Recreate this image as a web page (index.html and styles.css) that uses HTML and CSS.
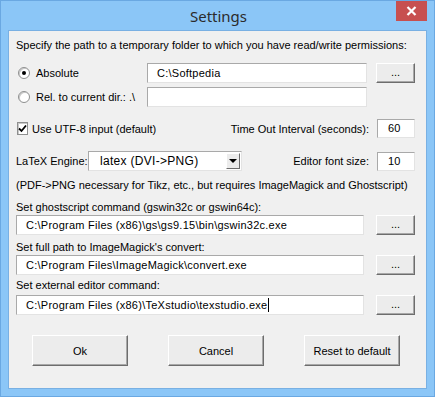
FILE: index.html
```html
<!DOCTYPE html>
<html lang="en">

<head>
    <meta charset="UTF-8">
    <meta name="viewport" content="width=device-width, initial-scale=1.0">
    <title>Settings</title>
    <link rel="stylesheet" href="styles.css">
</head>

<body>
    <div class="window">
        <div class="titlebar">
            <span class="title">Settings</span>
            <div class="close">
                <svg width="11" height="10" viewBox="0 0 11 10">
                    <path d="M1.5 1 L9.5 9 M9.5 1 L1.5 9" stroke="#fff" stroke-width="2.2" />
                </svg>
            </div>
        </div>
        <div class="client">
            <p class="text intro">Specify the path to a temporary folder to which you have read/write permissions:</p>

            <div class="row row-abs">
                <label class="choice"><span class="radio on"></span>Absolute</label>
                <div class="field short">C:\Softpedia</div>
                <div class="btn dots">...</div>
            </div>
            <div class="row row-rel">
                <label class="choice"><span class="radio"></span>Rel. to current dir.: .\</label>
                <div class="field short"></div>
            </div>

            <div class="row row-utf">
                <label class="choice"><span class="check">
                    <svg width="9" height="9" viewBox="0 0 9 9">
                        <path d="M1 4.5 L3.5 7 L8 1.5" fill="none" stroke="#000" stroke-width="1.8" />
                    </svg>
                </span>Use UTF-8 input (default)</label>
                <span class="spacer"></span>
                <span class="text">Time Out Interval (seconds):</span>
                <div class="field tiny">60</div>
            </div>

            <div class="row row-engine">
                <span class="text engine-label">LaTeX Engine:</span>
                <div class="combo">
                    <span>latex (DVI-&gt;PNG)</span>
                    <div class="arrow"></div>
                </div>
                <span class="spacer"></span>
                <span class="text">Editor font size:</span>
                <div class="field tiny">10</div>
            </div>

            <p class="text note">(PDF-&gt;PNG necessary for Tikz, etc., but requires ImageMagick and Ghostscript)</p>

            <p class="text label first">Set ghostscript command (gswin32c or gswin64c):</p>
            <div class="row path">
                <div class="field long">C:\Program Files (x86)\gs\gs9.15\bin\gswin32c.exe</div>
                <div class="btn dots">...</div>
            </div>
            <p class="text label">Set full path to ImageMagick's convert:</p>
            <div class="row path">
                <div class="field long">C:\Program Files\ImageMagick\convert.exe</div>
                <div class="btn dots">...</div>
            </div>
            <p class="text label last">Set external editor command:</p>
            <div class="row path editor">
                <div class="field long">C:\Program Files (x86)\TeXstudio\texstudio.exe<span class="caret"></span></div>
                <div class="btn dots">...</div>
            </div>

            <div class="actions">
                <div class="btn big">Ok</div>
                <div class="btn big">Cancel</div>
                <div class="btn big">Reset to default</div>
            </div>
        </div>
    </div>
</body>

</html>
```

FILE: styles.css
```css
* { box-sizing: border-box; }

body {
    margin: 0;
    background: #8bc6f7;
}

.window {
    position: relative;
    width: 435px;
    height: 397px;
    background: #8bc6f7;
    border: 1px solid #6aa8e2;
    font-family: "Liberation Sans", Arial, sans-serif;
    font-size: 11px;
    color: #000;
}

.titlebar {
    height: 29px;
    display: flex;
    justify-content: center;
    align-items: center;
}

.title {
    font-family: "Noto Sans", "Open Sans", sans-serif;
    font-size: 15px;
    color: #2b2b2b;
    margin-left: 2px;
    margin-top: 1px;
}

.close {
    position: absolute;
    top: 0;
    right: 7px;
    width: 31px;
    height: 20px;
    background: #c75050;
    display: flex;
    justify-content: center;
    align-items: center;
}

.client {
    height: 359px;
    margin: 0 7px;
    background: #f0f0f0;
    border: 1px solid #79b0e3;
    padding: 0 11px 0 7px;
}

.text {
    margin: 0;
    line-height: 14px;
    white-space: nowrap;
}

.intro { padding-top: 7px; }

.row {
    display: flex;
    align-items: center;
    height: 20px;
}

.row-abs { margin-top: 11px; }
.row-rel { margin-top: 4px; }
.row-utf { margin-top: 12px; height: 19px; }
.row-engine { margin-top: 13px; }

.spacer { flex: 1; }

.choice {
    width: 131px;
    display: flex;
    align-items: center;
    white-space: nowrap;
}

.radio {
    width: 12px;
    height: 12px;
    margin: 0 6px 0 2px;
    border-radius: 50%;
    background: #fff;
    border: 1px solid #8e8f8f;
    box-shadow: inset 1px 1px 0 #c9c9c9;
    display: flex;
    justify-content: center;
    align-items: center;
}

.radio.on::after {
    content: "";
    width: 4px;
    height: 4px;
    border-radius: 50%;
    background: #000;
}

.check {
    width: 13px;
    height: 13px;
    margin: 0 4px 0 1px;
    background: #fff;
    border: 1px solid #8e8f8f;
    box-shadow: inset 1px 1px 0 #c9c9c9;
    display: flex;
    justify-content: center;
    align-items: center;
}

.field {
    height: 20px;
    background: #fff;
    border: 1px solid;
    border-color: #a9a9a9 #e3e3e3 #e3e3e3 #a9a9a9;
    padding-left: 9px;
    line-height: 18px;
    letter-spacing: 0.25px;
    white-space: nowrap;
    overflow: hidden;
}

.field.short { width: 220px; }
.field.long { width: 348px; }

.field.tiny {
    width: 38px;
    height: 19px;
    margin-left: 8px;
    padding-left: 10px;
    line-height: 17px;
}

.caret {
    display: inline-block;
    width: 1px;
    height: 14px;
    background: #000;
    vertical-align: -3px;
    margin-left: 1px;
}

.btn {
    background: #ececec;
    border: 1px solid;
    border-color: #fff #6d6d6d #6d6d6d #fff;
    box-shadow: inset -1px -1px 0 #a8a8a8;
    display: flex;
    justify-content: center;
    align-items: center;
    white-space: nowrap;
}

.btn.dots {
    width: 39px;
    height: 20px;
    margin-left: 9px;
    padding-bottom: 3px;
}

.path { margin-top: 1px; }
.path .btn.dots { margin-left: 12px; }
.editor { margin-top: 3px; }

.engine-label { width: 72px; }

.combo {
    width: 154px;
    height: 20px;
    background: #fff;
    border: 1px solid;
    border-color: #a9a9a9 #e3e3e3 #e3e3e3 #a9a9a9;
    display: flex;
    align-items: center;
    padding-left: 11px;
    letter-spacing: 0.3px;
    font-size: 12px;
}

.combo span { flex: 1; }

.arrow {
    width: 14px;
    height: 16px;
    margin-right: 1px;
    background: #ececec;
    border: 1px solid;
    border-color: #fff #6d6d6d #6d6d6d #fff;
    display: flex;
    justify-content: center;
    align-items: center;
}

.arrow::after {
    content: "";
    border-left: 4px solid transparent;
    border-right: 4px solid transparent;
    border-top: 4px solid #000;
}

.note { margin-top: 7px; }
.label { margin-top: 5px; }
.label.first { margin-top: 8px; }
.label.last { margin-top: 3px; }

.actions {
    display: flex;
    gap: 40px;
    margin-top: 20px;
    padding-left: 16px;
}

.btn.big {
    width: 96px;
    height: 31px;
}
```
